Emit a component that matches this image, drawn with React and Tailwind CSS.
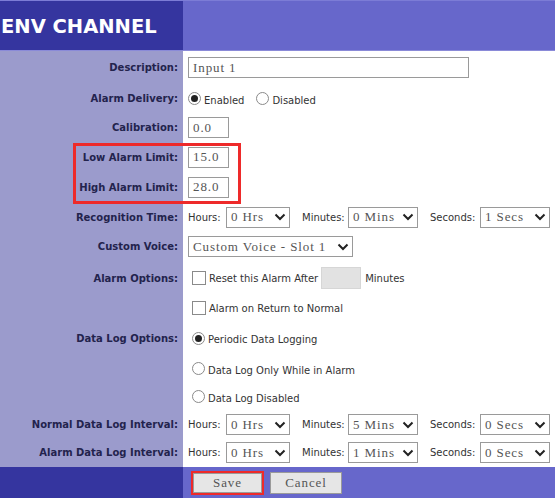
import React from "react";

const SANS = "[font-family:'DejaVu_Sans',Verdana,sans-serif]";
const LABEL = `${SANS} text-[10px] font-bold text-[#23234d]`;
const TEXT = `${SANS} text-[10px] text-[#333]`;
const MONO = "[font-family:'Liberation_Serif','Times_New_Roman',serif] text-[13px] tracking-[0.9px] text-[#555] whitespace-nowrap";

function Field({ value, w }) {
  return (
    <div className={`flex h-[21px] items-center border border-[#9a9a9a] bg-white px-[4px] ${MONO}`} style={{ width: w }}>
      {value}
    </div>
  );
}

function Chevron() {
  return (
    <svg width="12" height="8" viewBox="0 0 12 8" className="shrink-0">
      <path d="M1.5 1.5 L6 6 L10.5 1.5" fill="none" stroke="#222" strokeWidth="2" />
    </svg>
  );
}

function Select({ value, w }) {
  return (
    <div className={`flex h-[21px] items-center justify-between border border-[#9a9a9a] bg-white pl-[4px] pr-[3px] ${MONO}`} style={{ width: w }}>
      <span>{value}</span>
      <Chevron />
    </div>
  );
}

function Radio({ checked }) {
  return (
    <span className="flex h-[13px] w-[13px] shrink-0 items-center justify-center rounded-full border border-[#8a8a8a] bg-white">
      {checked && <span className="h-[7px] w-[7px] rounded-full bg-[#222]" />}
    </span>
  );
}

function Check() {
  return <span className="h-[14px] w-[14px] shrink-0 border border-[#8a8a8a] bg-white" />;
}

function Timer({ h, m, s }) {
  return (
    <div className="flex items-center">
      <span className={`${TEXT} w-[38px]`}>Hours:</span>
      <Select value={h} w={64} />
      <span className={`${TEXT} ml-[12px] w-[46px]`}>Minutes:</span>
      <Select value={m} w={70} />
      <span className={`${TEXT} ml-[12px] w-[50px]`}>Seconds:</span>
      <Select value={s} w={70} />
    </div>
  );
}

function Row({ label, h, children }) {
  return (
    <div className="flex" style={{ height: h }}>
      <div className={`flex w-[183px] shrink-0 items-center justify-end pr-[5px] ${LABEL}`}>{label}</div>
      <div className="flex flex-1 items-center pl-[5px]">{children}</div>
    </div>
  );
}

export default function App() {
  return (
    <div className="relative h-[498px] w-[555px] overflow-hidden bg-white">
      {/* title bar */}
      <div className="flex h-[51px] border-t border-[#7c7cd6] border-b border-b-[#8a8ad8]">
        <div className="flex w-[183px] items-center bg-[#35359f] pl-[1px] pt-[3px]">
          <span className={`${SANS} text-[19.5px] font-bold text-white`}>ENV CHANNEL</span>
        </div>
        <div className="flex-1 bg-[#6767cb]" />
      </div>

      {/* form body */}
      <div className="relative bg-[linear-gradient(to_right,#9b9bcc_0,#9b9bcc_183px,#ffffff_183px)]">
        <Row label="Description:" h={33}>
          <Field value="Input 1" w={281} />
        </Row>
        <Row label="Alarm Delivery:" h={29}>
          <div className="flex items-center gap-[3px]">
            <Radio checked />
            <span className={`${TEXT} mt-[3px]`}>Enabled</span>
            <span className="ml-[9px]"><Radio /></span>
            <span className={`${TEXT} mt-[3px]`}>Disabled</span>
          </div>
        </Row>
        <Row label="Calibration:" h={29}>
          <Field value="0.0" w={41} />
        </Row>
        <Row label="Low Alarm Limit:" h={30}>
          <Field value="15.0" w={41} />
        </Row>
        <Row label="High Alarm Limit:" h={30}>
          <Field value="28.0" w={41} />
        </Row>
        <Row label="Recognition Time:" h={30}>
          <Timer h="0 Hrs" m="0 Mins" s="1 Secs" />
        </Row>
        <Row label="Custom Voice:" h={29}>
          <Select value="Custom Voice - Slot 1" w={165} />
        </Row>
        <Row label="Alarm Options:" h={34}>
          <div className="flex items-center pl-[4px]">
            <Check />
            <span className={`${TEXT} ml-[3px]`}>Reset this Alarm After</span>
            <span className="ml-[3px] h-[22px] w-[40px] border border-[#d6d6d6] bg-[#e2e2e2]" />
            <span className={`${TEXT} ml-[4px]`}>Minutes</span>
          </div>
        </Row>
        <Row label="" h={26}>
          <div className="flex items-center pl-[4px]">
            <Check />
            <span className={`${TEXT} ml-[3px]`}>Alarm on Return to Normal</span>
          </div>
        </Row>
        <Row label="Data Log Options:" h={34}>
          <div className="flex items-center gap-[3px] pl-[4px]">
            <Radio checked />
            <span className={`${TEXT} mt-[3px]`}>Periodic Data Logging</span>
          </div>
        </Row>
        <Row label="" h={27}>
          <div className="flex items-center gap-[3px] pl-[4px]">
            <Radio />
            <span className={`${TEXT} mt-[3px]`}>Data Log Only While in Alarm</span>
          </div>
        </Row>
        <Row label="" h={29}>
          <div className="flex items-center gap-[3px] pl-[4px]">
            <Radio />
            <span className={`${TEXT} mt-[3px]`}>Data Log Disabled</span>
          </div>
        </Row>
        <Row label="Normal Data Log Interval:" h={27}>
          <Timer h="0 Hrs" m="5 Mins" s="0 Secs" />
        </Row>
        <Row label="Alarm Data Log Interval:" h={29}>
          <Timer h="0 Hrs" m="1 Mins" s="0 Secs" />
        </Row>

        {/* highlight around the limit fields */}
        <div className="pointer-events-none absolute left-[73px] top-[92px] h-[61px] w-[168px] border-[3px] border-[#ee2a2a]" />
      </div>

      {/* action bar */}
      <div className="flex h-[31px]">
        <div className="w-[183px] bg-[#35359f]" />
        <div className="flex flex-1 items-center gap-[6px] bg-[#6767cb] pl-[8px]">
          <div className="border-[2px] border-[#ee2a2a]">
            <button className={`flex h-[20px] w-[69px] items-center justify-center border border-[#9a9a9a] bg-[#e6e6e6] ${MONO} text-[#444]`}>
              Save
            </button>
          </div>
          <button className={`flex h-[22px] w-[72px] items-center justify-center border border-[#9a9a9a] bg-[#e6e6e6] ${MONO} text-[#444]`}>
            Cancel
          </button>
        </div>
      </div>
    </div>
  );
}
